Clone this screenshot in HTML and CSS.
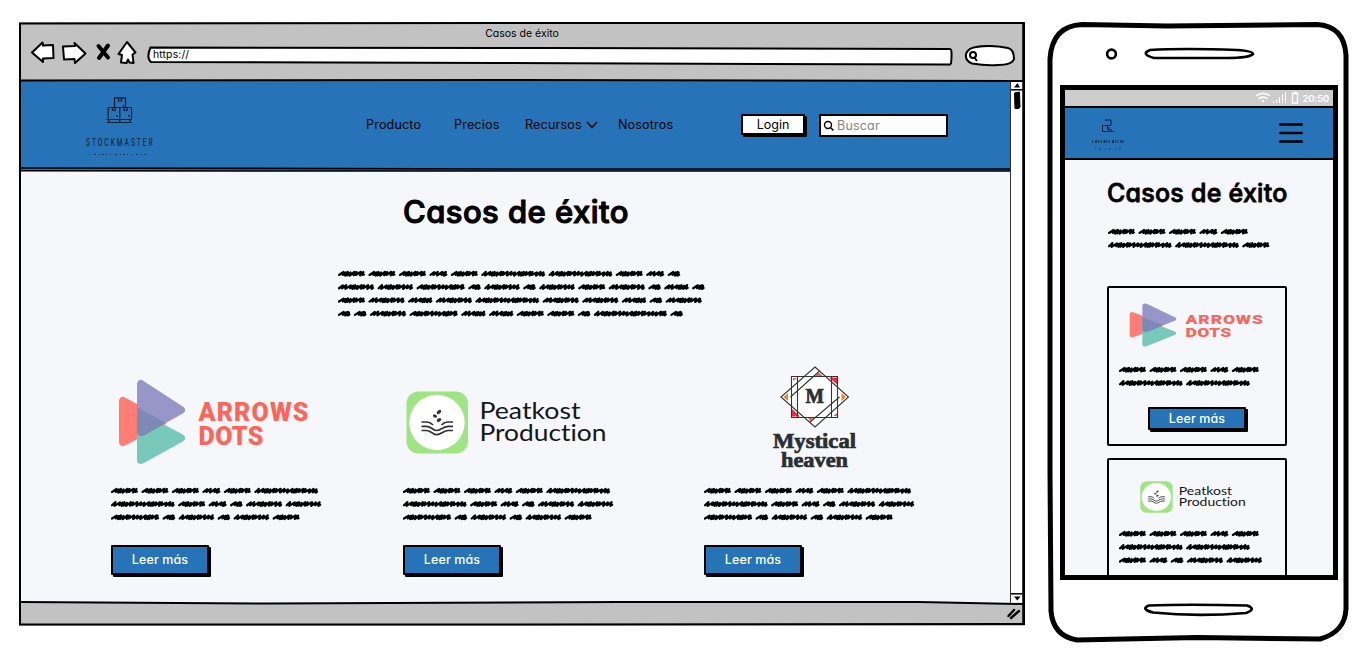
FILE: index.html
```html
<!DOCTYPE html>
<html lang="es">
<head>
<meta charset="utf-8">
<title>Casos de éxito</title>
<link rel="stylesheet" href="styles.css">
</head>
<body>
<svg class="defs" aria-hidden="true">
  <symbol id="arrows" viewBox="0 0 192 86" preserveAspectRatio="none">
    <g stroke-width="8" stroke-linejoin="round">
      <path d="M5 22V63L44 43Z" fill="#ff7d74" stroke="#ff7d74"/>
      <path d="M23 38V81L63 59L46 50Z" fill="#78c9ba" stroke="#78c9ba"/>
      <path d="M23 5V53L63 31Z" fill="#9796c8" stroke="#9796c8"/>
    </g>
    <path d="M19 28L48 44L26 56.500Q19 58 19 52Z" fill="#7d89b6"/>
    <g font-family="Roboto" font-weight="900" font-size="25" fill="#ff6459">
      <text x="80.500" y="42" textLength="110" lengthAdjust="spacing">ARROWS</text>
      <text x="80.500" y="66" textLength="65" lengthAdjust="spacing">DOTS</text>
    </g>
  </symbol>
  <symbol id="peat" viewBox="0 0 201 63" preserveAspectRatio="none">
    <rect x=".5" y=".5" width="61.500" height="62" rx="12" fill="#a0e583"/>
    <circle cx="31" cy="31.500" r="27.700" fill="#fff"/>
    <g fill="none" stroke="#333" stroke-width="1.700">
      <path d="M15.500 31H21Q24 31 27 34M47 31H41.500Q38.500 31 35.500 34M15.500 35.300H20Q23 35.300 26 37.500T31 39.500T36 37.500T42 35.300H47M15.500 39.500H20Q23 39.500 26 41.700T31 43.700T36 41.700T42 39.500H47"/>
    </g>
    <g fill="#333"><ellipse cx="33" cy="21" rx="2.600" ry="1.700" transform="rotate(-40 33 21)"/><ellipse cx="29" cy="25" rx="2.200" ry="1.500" transform="rotate(30 29 25)"/><ellipse cx="33" cy="29" rx="2.500" ry="1.600" transform="rotate(-30 33 29)"/></g>
    <g font-family="Lato" font-size="23" fill="#161616" style="font-variant-ligatures: none">
      <text x="73.500" y="27.500" textLength="101" lengthAdjust="spacingAndGlyphs">Peatkost</text>
      <text x="73.500" y="49.500" textLength="127" lengthAdjust="spacingAndGlyphs">Production</text>
    </g>
  </symbol>
</svg>

<main class="stage">
  <section class="browser">
    <svg class="frame" viewBox="0 0 1006 604">
      <g fill="none" stroke="#000" stroke-width="2">
        <path d="M1 1.500L500 1H1005V602L500 602.500H1Z"/>
        <path d="M1 58.500L500 58L1004 59M1 580L250 581.500L600 580L900 580L1004 582"/>
        <path d="M2 146L500 147H991" stroke-width="1.700"/>
        <path d="M2 148.800L500 149H991" stroke-width="1.500"/>
      </g>
      <path d="M1004.500 2V602" stroke="#000" stroke-width="2.500"/>
    </svg>
    <div class="chrome">
      <div class="title">Casos de éxito</div>
      <div class="toolbar">
        <svg class="controls" viewBox="0 0 108 28" width="108" height="28">
          <g fill="#fff" stroke="#000" stroke-width="2" stroke-linejoin="round">
            <path d="M2 13.500L12.500 3.500L13 6.500L23 6L23.500 19L13 19.500V23Z"/>
            <path d="M33 7.500L45 7L44.500 4L55.500 14.500L45 24L44.500 20L34 20.500Z"/>
            <path d="M97 3L105.500 13.500L102.500 15.500L103.500 24L99.500 23.500L98 20.500L96.500 24L91 23.500L92 16L88.500 15Z"/>
          </g>
          <path d="M68.500 7L78 18.500M78 6.500L69 19" stroke="#000" stroke-width="4" stroke-linecap="round"/>
        </svg>
        <div class="address">
          <svg viewBox="0 0 806 20" width="806" height="20"><path d="M3.500 1.500L400 2L803 3Q805.500 3 804 17.500Q803 19 801 18.500L350 17L4 16Q-1 12 3.500 1.500Z" fill="#fff" stroke="#000" stroke-width="2"/></svg>
          <span>https://</span>
        </div>
        <svg class="quick" viewBox="0 0 52 22" width="52" height="22">
          <path d="M12 2Q28-.5 44 3Q50 4.500 50 14Q48 20 34 20Q22 21 8 18.500Q1 16 2 9Q4 3 12 2Z" fill="#fff" stroke="#000" stroke-width="2"/>
          <circle cx="9" cy="10" r="3" fill="none" stroke="#000" stroke-width="2"/><path d="M10 12L13 16" stroke="#000" stroke-width="2"/>
        </svg>
      </div>
    </div>
    <div class="viewport">
      <div class="page">
        <header class="nav">
          <svg class="brand" viewBox="0 0 70 64" width="70" height="64">
            <g fill="none" stroke="#081e31" stroke-width="1.200">
              <path d="M29.500 10V.8H40.500V10M23.200 21.500V10.500H46.500V21.500M34.800 10.500V21.500M21.500 22.500H47M21.500 25.500H47M24 22V26M34.800 22V26M45 22V26"/>
              <path d="M33.500 1V4H36.500V1M27.500 11V13.500H30V11M39 11V13.500H42V11M37.500 9H39.500M31 18.800H33M43 18.800H45"/>
            </g>
            <text class="wordmark" x="1.700" y="48.600" transform="scale(.6 1)" textLength="111" lengthAdjust="spacing">STOCKMASTER</text>
            <path d="M4 57.500H62" stroke="#0d3252" stroke-width="1" stroke-dasharray="1 4 2 3 1 2 2 2 1 3"/>
          </svg>
          <nav class="links">
            <a class="l1">Producto</a><a class="l2">Precios</a>
            <a class="l3">Recursos<svg viewBox="0 0 12 8" width="12" height="8"><path d="M1 1L6 6.500L11 1" fill="none" stroke="#000" stroke-width="1.400"/></svg></a>
            <a class="l4">Nosotros</a>
          </nav>
          <button class="login">Login</button>
          <div class="search">
            <svg viewBox="0 0 12 12" width="12" height="12"><circle cx="5" cy="5" r="3.500" fill="none" stroke="#000" stroke-width="1.400"/><path d="M7.500 7.500L10.500 10.500" stroke="#000" stroke-width="1.500"/></svg>
            <span>Buscar</span>
          </div>
        </header>
        <h1 class="heading">Casos de éxito</h1>
        <div class="scribble intro" data-lines="AAABACCABD EFGDFDFAEDHD AEHECEEHDE DDEGHHAADID"></div>
        <div class="cases">
          <article>
            <div class="logo"><svg class="lg-arrows"><use href="#arrows"/></svg></div>
            <div class="scribble" data-lines="AAABAC CABDEF GDFDFA"></div>
            <button class="more">Leer más</button>
          </article>
          <article>
            <div class="logo"><svg class="lg-peat"><use href="#peat"/></svg></div>
            <div class="scribble" data-lines="AAABAC CABDEF GDFDFA"></div>
            <button class="more">Leer más</button>
          </article>
          <article>
            <div class="logo"><svg class="lg-mystic" viewBox="0 0 86 106" width="86" height="106">
              <path d="M19.500 10.500H65.500V51.500H19.500Z M43 1L76.500 31L43 61L9 31Z" fill="#fff"/>
              <path d="M57 11.500H65V18.500ZM20 43L28 50.500H20Z" fill="#f5283f"/>
              <path d="M11.500 31L16 27V35ZM74 31L69.500 27V35Z" fill="#f58220"/>
              <path d="M43 10L47 6.500L50.500 10ZM36 52H41L38.500 55ZM21 12H25L21 15ZM65 50H61L65 47Z" fill="#fb6544"/>
              <g fill="none" stroke="#303536" stroke-width="1.100">
                <path d="M19.500 10.500H65.500V51.500H19.500ZM25.500 10.500V51.500M59.500 10.500V51.500M43 1L76.500 31L43 61L9 31ZM18.500 31L47 5.500M67.500 31L38 56"/>
              </g>
              <g font-family="Liberation Serif, serif" font-weight="bold" fill="#2a2f30" stroke="#2a2f30" stroke-width=".7">
                <text x="33.500" y="37" font-size="20" textLength="18.500" lengthAdjust="spacingAndGlyphs">M</text>
                <text x="1" y="82" font-size="21" textLength="83" lengthAdjust="spacingAndGlyphs">Mystical</text>
                <text x="9" y="101" font-size="21" textLength="67" lengthAdjust="spacingAndGlyphs">heaven</text>
              </g>
            </svg></div>
            <div class="scribble" data-lines="AAABAC CABDEF GDFDFA"></div>
            <button class="more">Leer más</button>
          </article>
        </div>
      </div>
      <div class="scrollbar">
        <svg viewBox="0 0 12 30" width="12" height="30"><path d="M0 8.800H12" stroke="#000" stroke-width="1.500"/><path d="M3 6.500L6.500 2L9 6.500Z"/><path d="M3.500 12L8.500 11L9 26L8 27.500H4Z" stroke="#000"/></svg>
        <svg viewBox="0 0 12 10" width="12" height="10"><path d="M0 .8H12" stroke="#000" stroke-width="1.500"/><path d="M3 3.500H9.500L6.300 7.500Z"/></svg>
      </div>
    </div>
    <div class="status"><svg viewBox="0 0 14 12" width="14" height="12"><path d="M1.500 8L7 2M4 10L12 3" stroke="#000" stroke-width="2.400" stroke-linecap="round"/></svg></div>
  </section>

  <section class="phone">
    <svg class="frame" viewBox="0 0 302 622">
      <g fill="none" stroke="#000">
        <path d="M35 3.500L120 5L270 3.500Q297 5 299 34V588Q298 611 273 618L150 616.500L30 619Q6 615 4 590L3 450V38Q5 5 35 3.500Z" stroke-width="5" fill="#fff"/>
        <circle cx="64.500" cy="33" r="4.400" stroke-width="2.600"/>
        <path d="M103 29Q135 27 190 29Q206 30 206 33Q202 37 180 37L107 37Q93 33 103 29Z" stroke-width="2.700"/>
        <path d="M102 584.500Q140 583 200 584.500Q210 588 199 592Q150 596 106 591.500Q93 588 102 584.500Z" stroke-width="2.700"/>
      </g>
    </svg>
    <div class="screen">
      <div class="mstatus">
        <svg viewBox="0 0 46 14" width="46" height="14"><g fill="none" stroke="#fff" stroke-width="1.300"><path d="M1 5Q8-.5 15 5M3.500 8Q8 4 12.500 8"/><path d="M18.500 12V10M21.500 12V8.500M24.500 12V6M27.500 12V3.500M30.500 12V1.500" stroke-width="1"/><path d="M37.500 2.500H42.500V12H37.500ZM38.500 1.500H41.500"/></g><path d="M6.500 10L8 8.500L9.500 10L8 11.500Z" fill="#fff"/></svg>
        <span>20:50</span>
      </div>
      <div class="mhead">
        <svg viewBox="0 0 34 32" width="34" height="32"><g fill="none" stroke="#081e31" stroke-width="1"><path d="M14 1H20V6M16.500 6V11M11.500 6.500H20M11.500 6V12M11 12.500H23M18 8V11H21"/><path d="M1 22.500H33" stroke-width="3" stroke-dasharray="1 2 2 1 1 1.500" opacity=".7"/><path d="M4 30H32" stroke-dasharray="1 3 2 4" opacity=".6"/></g></svg>
        <svg viewBox="0 0 24 20" width="24" height="20"><path d="M1 1.500H23M1 10H23M1 18.500H23" stroke="#000" stroke-width="2.400" stroke-linecap="round"/></svg>
      </div>
      <div class="mbody">
        <h2 class="mheading">Casos de éxito</h2>
        <div class="scribble mintro" data-lines="AAABA CCA"></div>
        <article class="mcard">
          <svg class="m-arrows"><use href="#arrows"/></svg>
          <div class="scribble" data-lines="AAABA CC"></div>
          <button class="more small">Leer más</button>
        </article>
        <article class="mcard second">
          <svg class="m-peat"><use href="#peat"/></svg>
          <div class="scribble" data-lines="AAABA CC ABDEF"></div>
        </article>
      </div>
    </div>
  </section>
</main>
<script src="scribble.js"></script>
</body>
</html>
```
FILE: scribble.js
```js
// Draws placeholder copy: each letter stands for a scribbled word of a given advance.
const ADVANCE = { A: 30.5, B: 21.4, C: 67.2, D: 16, E: 39.6, F: 39, G: 51.7, H: 27.8, I: 76.5 };
const STEPS = [3.8, 3.4, 4.6, 2.4, 1.9, 2.6, 3.9, 2.2, 4.3];
const RISE = [1.6, 1.9, 1.7, 1.3, 1.8, 1.2, 1.9];
const ROW = 13.3;

function word(x, y, width, seed) {
  const end = x + width - 5.4;
  let px = x + 1, i = seed, d = `M${px} ${y + 1.3}`;
  while (px < end) {
    const step = Math.min(STEPS[i % STEPS.length], end - px + 0.3);
    const up = RISE[i % RISE.length], down = RISE[(i + 3) % RISE.length];
    d += `L${(px + step).toFixed(1)} ${(y - up).toFixed(1)}L${(px + step - 0.8).toFixed(1)} ${(y + down).toFixed(1)}`;
    px += step;
    i++;
  }
  return d + `L${end + 0.8} ${y + 0.9}`;
}

document.querySelectorAll('.scribble').forEach(el => {
  const lines = el.dataset.lines.split(' ');
  let d = '', widest = 0;
  lines.forEach((line, row) => {
    let x = 0;
    for (const key of line) {
      d += word(x, ROW * (row + 0.5), ADVANCE[key], key.charCodeAt(0) % 3);
      x += ADVANCE[key];
    }
    widest = Math.max(widest, x);
  });
  el.innerHTML = `<svg width="${Math.ceil(widest)}" height="${Math.round(lines.length * ROW)}"><path d="${d}"/></svg>`;
});
```
FILE: styles.css
```css
* { box-sizing: border-box; }
body { margin: 0; background: #fff; color: #000; font-family: Inter, sans-serif; font-feature-settings: "cv11"; overflow: hidden; }
svg { display: block; flex: none; }
.defs { position: absolute; width: 0; height: 0; }
.stage { display: flex; gap: 22px; width: 1369px; height: 660px; padding: 21px 20px 0 19px; }
.frame { position: absolute; inset: 0; width: 100%; height: 100%; pointer-events: none; }

.browser { position: relative; width: 1006px; height: 604px; margin-top: 1px; padding: 2px; display: flex; flex-direction: column; background: #c2c2c2; }
.browser .frame { z-index: 2; }
.chrome { height: 57px; }
.title { height: 19px; line-height: 19px; font-size: 10.500px; letter-spacing: 0; text-align: center; }
.toolbar { display: flex; align-items: flex-start; padding-left: 9px; }
.controls { margin-top: -4px; }
.address { position: relative; margin: 3px 0 0 9px; }
.address span { position: absolute; left: 6px; top: 2px; font-size: 10.500px; line-height: 14px; letter-spacing: .1px; }
.quick { margin: 2px 0 0 11px; }
.viewport { flex: 1; display: flex; min-height: 0; }
.page { flex: 1; background: #f5f7fb; }
.nav { height: 90px; background: #2673b8; display: flex; align-items: flex-start; padding-left: 64px; }
.brand { margin-top: 16px; }
.wordmark { font-family: Roboto, sans-serif; font-size: 11px; fill: #071a2a; }
.links { display: flex; padding: 35px 0 0 211px; font-size: 12.500px; line-height: 17px; letter-spacing: .2px; }
.links a { white-space: nowrap; }
.l1 { width: 88px; }
.l2 { width: 71px; }
.l3 { width: 93px; display: flex; align-items: center; gap: 4px; }
.l4 { width: 123px; }
button { font: inherit; font-feature-settings: inherit; padding: 0; color: inherit; }
.login { width: 64px; height: 21px; margin-top: 33px; border: 2px solid #000; border-radius: 1px; background: #fff; font-size: 12.500px; line-height: 17px; box-shadow: 2px 2px 0 #000; }
.search { width: 129px; height: 23px; margin: 33px 0 0 14px; border: 2px solid #000; border-radius: 1px; background: #fff; display: flex; align-items: center; gap: 2px; padding-left: 2px; color: #858585; font-size: 12.500px; letter-spacing: .2px; }
.heading { margin: 0; padding: 18px 0 0 382px; font-size: 31px; line-height: 46px; font-weight: 500; white-space: nowrap; letter-spacing: .45px; -webkit-text-stroke: 1.100px #000; paint-order: stroke; stroke-linejoin: round; }
.scribble path { fill: none; stroke: #000; stroke-width: 2.200; stroke-linejoin: round; stroke-linecap: round; }
.intro { margin: 32px 0 0 317px; }
.cases { display: grid; grid-template-columns: 292px 301px 1fr; padding-left: 90px; }
.logo { height: 164px; }
.lg-arrows { width: 192px; height: 86px; margin: 0 0 0 7px; transform: translateY(59px); }
.lg-peat { width: 201px; height: 63px; margin-left: 3px; transform: translateY(71px); }
.lg-mystic { margin-left: 68px; transform: translateY(46px); }
.more { display: block; width: 98px; height: 30px; margin-top: 21px; padding-bottom: 1px; border: 2px solid #000; border-radius: 1px; background: #2673b8; color: #fff; font-size: 12.500px; font-weight: 500; letter-spacing: .1px; box-shadow: 2px 2px 0 #000; }
.scrollbar { width: 13px; background: #fff; border-left: 1px solid #333; display: flex; flex-direction: column; justify-content: space-between; }
.status { height: 21px; display: flex; justify-content: flex-end; align-items: center; padding-right: 2px; }

.phone { position: relative; width: 302px; height: 622px; padding: 64px 0 0 13px; }
.screen { position: relative; width: 278px; height: 495px; border: 5px solid #000; background: #f5f7fb; display: flex; flex-direction: column; overflow: hidden; }
.mstatus { flex: none; height: 18px; background: #ccc; display: flex; justify-content: flex-end; align-items: center; gap: 2px; padding-right: 4px; color: #fff; font-size: 9.500px; font-weight: 600; letter-spacing: -.2px; border-bottom: 2px solid #000; }
.mhead { flex: none; height: 52px; background: #2673b8; border-bottom: 2px solid #000; display: flex; justify-content: space-between; align-items: flex-start; padding: 11px 30px 0 26px; }
.mhead svg:last-child { margin-top: 4px; }
.mbody { padding-left: 42px; }
.mheading { margin: 0; padding-top: 15px; font-size: 25px; line-height: 36px; font-weight: 500; letter-spacing: .25px; white-space: nowrap; -webkit-text-stroke: .8px #000; }
.mintro { margin: 14px 0 0 1px; }
.mcard { width: 180px; height: 160px; border: 2px solid #000; border-radius: 2px; margin-top: 34px; }
.mcard .scribble { margin-left: 10px; }
.m-arrows { width: 135px; height: 44px; margin: 15px 0 16px 20px; }
.small { height: 23px; width: 98px; margin: 17px 0 0 39px; }
.second { margin-top: 12px; }
.m-peat { width: 106px; height: 32px; margin: 21px 0 14px 31px; }
```
